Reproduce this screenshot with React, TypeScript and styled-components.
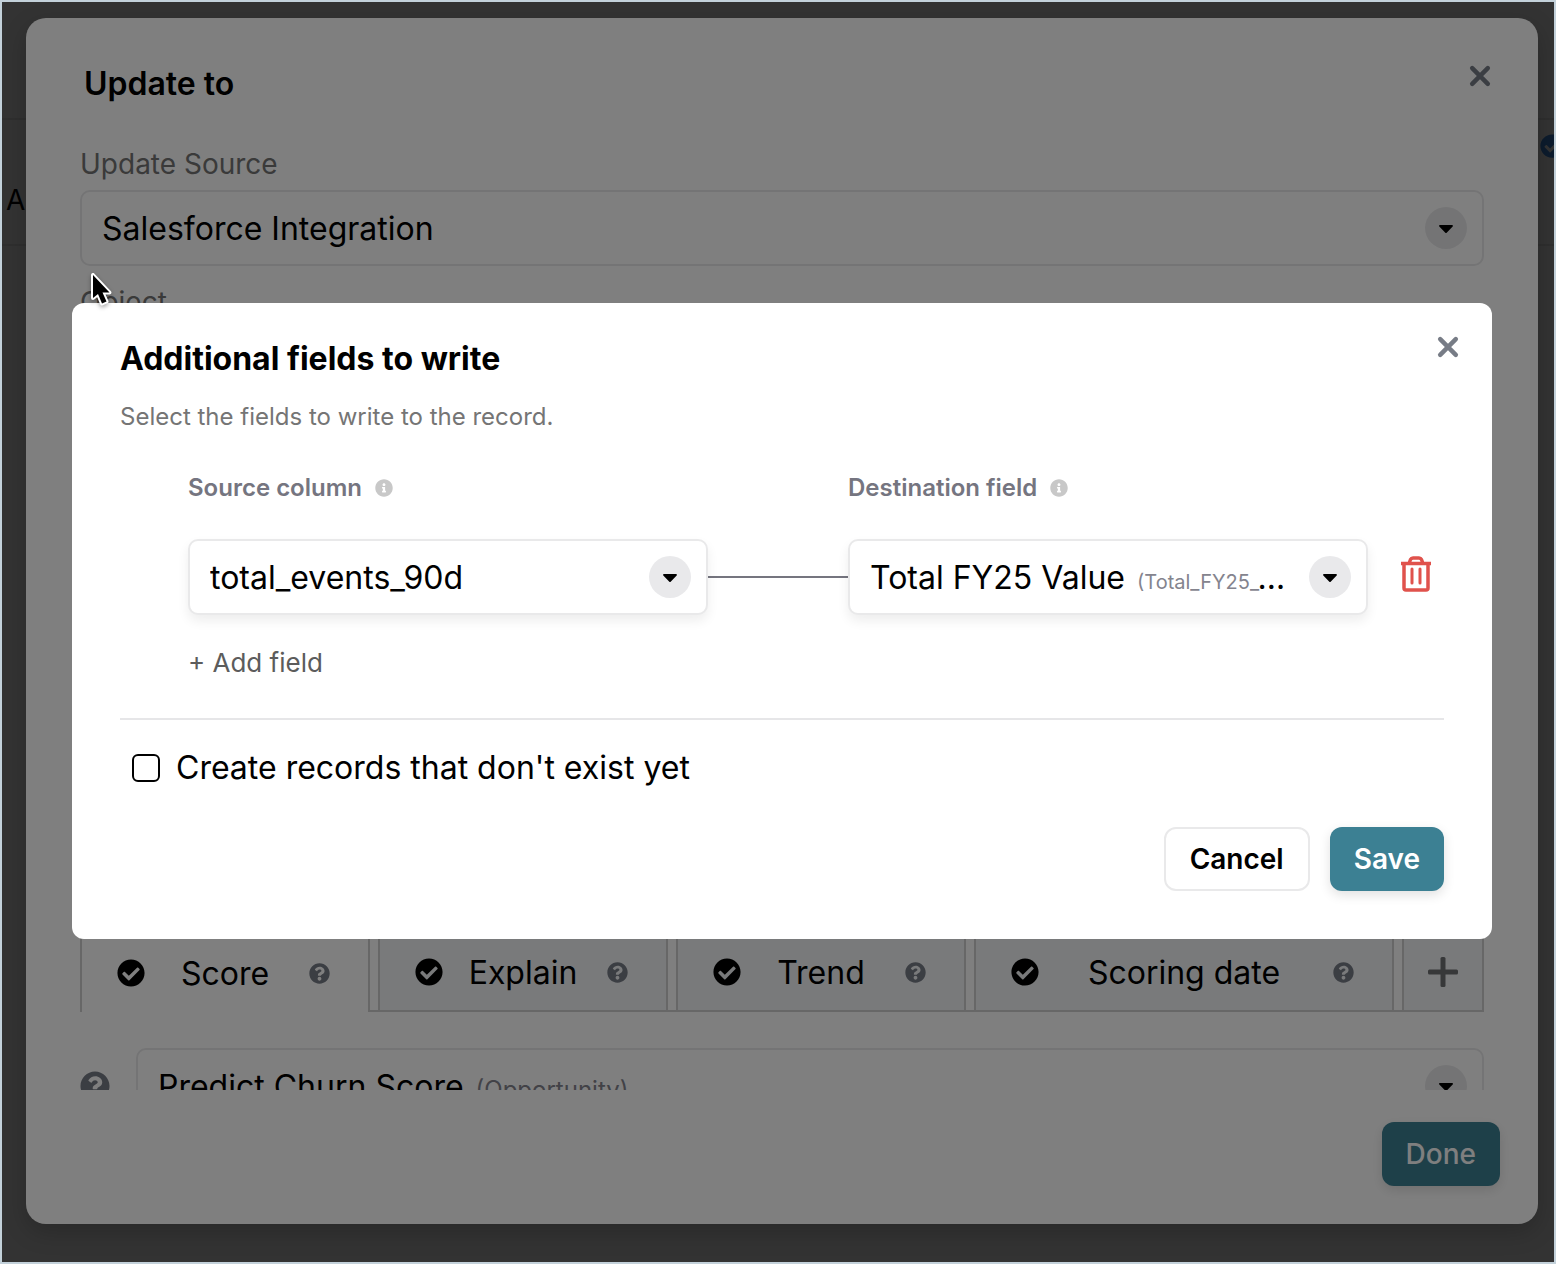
import React, { useId, useState } from 'react';
import styled, { createGlobalStyle, css } from 'styled-components';
import { FaCaretDown, FaCheckCircle, FaInfoCircle, FaQuestionCircle } from 'react-icons/fa';

const GlobalStyle = createGlobalStyle`
  *, *::before, *::after { box-sizing: border-box; }
  body { margin: 0; font-family: Inter, "Liberation Sans", sans-serif; color: #000; }
  button, input, select { font: inherit; color: inherit; }
  h1, h2, p { margin: 0; }
`;

const Frame = styled.div`
  display: grid;
  grid-template-columns: minmax(0, 1fr);
  min-height: 100vh;
  border: 2px solid #c3d1da;
  overflow: hidden;
`;

const layer = css`
  grid-area: 1 / 1;
  min-width: 0;
  isolation: isolate;
`;

const Backdrop = styled.div<{ $strength: number }>`
  ${layer}
  background: rgba(0, 0, 0, ${(p) => p.$strength});
`;

/* ---------- page behind the dialogs ---------- */

const Page = styled.main`
  ${layer}
  background: #fff;
  padding-top: 116px;
`;

const RecordRow = styled.div`
  display: flex;
  justify-content: space-between;
  height: 128px;
  padding: 24px 0 0 4px;
  border-top: 2px solid #e8e8e8;
  border-bottom: 2px solid #e8e8e8;
  font-size: 28px;
  line-height: 112px;
  overflow: hidden;
`;

const RecordName = styled.span`
  width: 20px;
`;

const RecordStatus = styled.span`
  display: flex;
  flex: none;
  height: 24px;
  margin-right: -10px;
  margin-top: -10px;
  color: #3f8ae0;
  font-size: 24px;
`;

/* ---------- update dialog ---------- */

const UpdateLayer = styled.div`
  ${layer}
  display: flex;
  padding: 16px 16px 38px 24px;
`;

const UpdateDialog = styled.section`
  flex: 1;
  min-width: 0;
  display: flex;
  flex-direction: column;
  padding: 38px 38px 38px 54px;
  background: #fff;
  border-radius: 20px;
  box-shadow: 0 8px 24px rgba(0, 0, 0, 0.2);
`;

const DialogHeader = styled.header`
  display: flex;
  align-items: flex-start;
  justify-content: space-between;
`;

const UpdateTitle = styled.h1`
  padding: 8px 4px 6px;
  font-size: 32px;
  line-height: 40px;
  font-weight: 600;
`;

const CloseButton = styled.button`
  display: flex;
  padding: 8px;
  border: 0;
  background: none;
  color: #777c86;
  cursor: pointer;
`;

const UpdateBody = styled.div`
  height: 980px;
  padding: 32px 16px 0 0;
  overflow: hidden;
`;

const FieldLabel = styled.label`
  display: block;
  padding: 4px 0 8px;
  font-size: 28px;
  line-height: 36px;
  color: #757575;
`;

const HiddenFields = styled.div`
  height: 650px;
  padding-top: 14px;
`;

const Tabs = styled.div`
  display: flex;
  gap: 8px;
  height: 96px;
  border-bottom: 2px solid #cecece;
`;

const Tab = styled.button<{ $active?: boolean; $grow?: boolean }>`
  display: flex;
  align-items: center;
  flex: ${(p) => (p.$grow ? '1 1 420px' : '0 0 290px')};
  height: ${(p) => (p.$active ? 96 : 94)}px;
  padding: 16px 38px 0 35px;
  border: 2px solid #cecece;
  border-bottom: 0;
  border-radius: 8px 8px 0 0;
  background: ${(p) => (p.$active ? '#fff' : '#f2f4f6')};
  font-size: 32px;
  cursor: pointer;
`;

const TabName = styled.span`
  flex: 1;
  padding-right: 4px;
  text-align: center;
`;

const AddTab = styled(Tab)`
  flex: 0 0 82px;
  justify-content: center;
  padding: 16px 0 0;
  color: #6f7073;
`;

const TabHelp = styled(FaQuestionCircle)`
  color: #777c86;
`;

const ScoreRow = styled.div`
  display: flex;
  align-items: center;
  gap: 26px;
  padding-top: 36px;
`;

const RowHelp = styled(FaQuestionCircle)`
  flex: none;
  color: #777c86;
`;

const UpdateFooter = styled.footer`
  display: flex;
  justify-content: flex-end;
  padding-top: 32px;
`;

/* ---------- shared controls ---------- */

const SelectBox = styled.div<{ $raised?: boolean }>`
  position: relative;
  flex: 1;
  min-width: 0;
  display: flex;
  align-items: center;
  height: 76px;
  padding: 0 15px 0 20px;
  border: 2px solid #e9e9ea;
  border-radius: 10px;
  background: #fff;
  font-size: 32px;
  box-shadow: ${(p) => (p.$raised ? '0 6px 12px rgba(0, 0, 0, 0.07)' : 'none')};
`;

const PlainSelect = styled.select`
  flex: 1;
  min-width: 0;
  height: 100%;
  padding: 0;
  border: 0;
  outline: 0;
  background: none;
  appearance: none;
`;

const CoverSelect = styled.select`
  position: absolute;
  inset: 0;
  width: 100%;
  opacity: 0;
  cursor: pointer;
`;

const Value = styled.span`
  flex: 1;
  min-width: 0;
  overflow: hidden;
  white-space: nowrap;
  text-overflow: ellipsis;
`;

const Detail = styled.small<{ $size: number }>`
  margin-left: 12px;
  font-size: ${(p) => p.$size}px;
  color: #84848e;
`;

const Caret = styled.span`
  display: flex;
  flex: none;
  align-items: center;
  justify-content: center;
  width: 42px;
  height: 42px;
  margin-left: 16px;
  border-radius: 50%;
  background: #e9e9eb;
  pointer-events: none;
`;

const Button = styled.button<{ $primary?: boolean; $medium?: boolean }>`
  height: 64px;
  padding: 0 24px;
  border: ${(p) => (p.$primary ? '0' : '2px solid #e9e9ea')};
  border-radius: 12px;
  background: ${(p) => (p.$primary ? '#3c8093' : '#fff')};
  color: ${(p) => (p.$primary ? '#fff' : '#000')};
  font-size: 28px;
  font-weight: ${(p) => (p.$medium ? 500 : 600)};
  box-shadow: ${(p) => (p.$primary ? '0 4px 12px rgba(0, 0, 0, 0.12)' : 'none')};
  cursor: pointer;
`;

/* ---------- fields dialog ---------- */

const FieldsLayer = styled.div`
  ${layer}
  display: flex;
  align-items: flex-start;
  padding: 301px 62px 0 70px;
`;

const FieldsDialog = styled.section`
  flex: 1;
  min-width: 0;
  padding: 24px 48px 48px;
  border-radius: 12px;
  background: #fff;
`;

const FieldsHeader = styled(DialogHeader)`
  margin-right: -24px;
`;

const FieldsTitle = styled.h2`
  padding-top: 12px;
  font-size: 32px;
  line-height: 40px;
  font-weight: 700;
`;

const Hint = styled.p`
  padding-top: 20px;
  font-size: 24px;
  line-height: 36px;
  color: #757575;
`;

const Mapping = styled.div`
  display: grid;
  grid-template-columns: minmax(0, 1fr) 140px minmax(0, 1fr) 76px;
  align-items: center;
  row-gap: 30px;
  padding: 32px 0 0 68px;
`;

const ColumnHead = styled.div`
  display: flex;
  align-items: center;
  gap: 13px;
  color: #757580;
  font-size: 24px;
  line-height: 42px;
  font-weight: 600;
`;

const InfoIcon = styled(FaInfoCircle)`
  color: #c8c8c8;
`;

const Connector = styled.hr`
  width: 100%;
  margin: 0;
  border: 0;
  border-top: 2px solid #75757f;
`;

const DeleteButton = styled.button`
  display: flex;
  justify-content: flex-end;
  padding: 0 12px 6px 0;
  border: 0;
  background: none;
  color: #e0524c;
  cursor: pointer;
`;

const AddField = styled.button`
  display: block;
  margin: 28px 0 0 68px;
  padding: 0;
  border: 0;
  background: none;
  color: #5c5c5c;
  font-size: 26px;
  line-height: 40px;
  cursor: pointer;
`;

const Divider = styled.hr`
  margin: 35px 0 28px;
  border: 0;
  border-top: 2px solid #e6e6e8;
`;

const CheckLabel = styled.label`
  display: flex;
  align-items: center;
  gap: 16px;
  padding-left: 12px;
  font-size: 32px;
  line-height: 40px;
`;

const Checkbox = styled.input`
  appearance: none;
  width: 28px;
  height: 28px;
  margin: 0;
  border: 2px solid #000;
  border-radius: 6px;
  background: #fff;
  &:checked { background: #3c8093; }
`;

const Actions = styled.footer`
  display: flex;
  justify-content: flex-end;
  gap: 20px;
  padding-top: 39px;
`;

const Pointer = styled.svg`
  position: absolute;
  left: 84px;
  top: 264px;
  filter: drop-shadow(0 2px 2px rgba(0, 0, 0, 0.35));
  pointer-events: none;
`;

const CloseIcon = () => (
  <svg width="24" height="24" viewBox="0 0 24 24" fill="none" stroke="currentColor" strokeWidth="4.500" strokeLinecap="round" aria-hidden="true">
    <path d="M4.200 4.200 19.800 19.800M19.800 4.200 4.200 19.800" />
  </svg>
);

const PlusIcon = () => (
  <svg width="30" height="30" viewBox="0 0 30 30" fill="currentColor" aria-hidden="true">
    <rect x="12.500" y="0" width="5" height="30" rx="1.500" />
    <rect x="0" y="12.500" width="30" height="5" rx="1.500" />
  </svg>
);

const TrashIcon = () => (
  <svg width="32" height="36" viewBox="0 0 32 36" fill="none" stroke="currentColor" strokeWidth="3.500" strokeLinejoin="round" aria-hidden="true">
    <path d="M1 7.500H31M9 7.500 10.500 3.500Q11.200 2 13 2H19Q20.800 2 21.500 3.500L23 7.500M4 8V32Q4 34 6 34H26Q28 34 28 32V8" />
    <path d="M12 13V27M20 13V27" strokeWidth="3" strokeLinecap="round" />
  </svg>
);

interface SelectProps {
  id: string;
  value: string;
  detail?: string;
  detailSize?: number;
  raised?: boolean;
  label?: string;
}

function Select({ id, value, detail, detailSize = 20, raised, label }: SelectProps) {
  return (
    <SelectBox $raised={raised}>
      {detail ? (
        <>
          <Value aria-hidden="true">
            {value}
            <Detail $size={detailSize}>{detail}</Detail>
          </Value>
          <CoverSelect id={id} aria-label={label}>
            <option>{value}</option>
          </CoverSelect>
        </>
      ) : (
        <PlainSelect id={id} aria-label={label}>
          <option>{value}</option>
        </PlainSelect>
      )}
      <Caret>
        <FaCaretDown size={24} />
      </Caret>
    </SelectBox>
  );
}

const tabs = [
  { name: 'Score' },
  { name: 'Explain' },
  { name: 'Trend' },
  { name: 'Scoring date', grow: true },
];

export default function App() {
  const id = useId();
  const [active, setActive] = useState('Score');
  const [create, setCreate] = useState(false);

  return (
    <>
      <GlobalStyle />
      <Frame>
        <Page>
          <RecordRow>
            <RecordName>A</RecordName>
            <RecordStatus>
              <FaCheckCircle />
            </RecordStatus>
          </RecordRow>
        </Page>
        <Backdrop $strength={0.6} />

        <UpdateLayer>
          <UpdateDialog role="dialog" aria-labelledby={`${id}-update`}>
            <DialogHeader>
              <UpdateTitle id={`${id}-update`}>Update to</UpdateTitle>
              <CloseButton aria-label="Close update">
                <CloseIcon />
              </CloseButton>
            </DialogHeader>
            <UpdateBody>
              <FieldLabel htmlFor={`${id}-source`}>Update Source</FieldLabel>
              <Select id={`${id}-source`} value="Salesforce Integration" />
              <HiddenFields>
                <FieldLabel as="span">Object</FieldLabel>
              </HiddenFields>
              <Tabs>
                {tabs.map((t) => (
                  <Tab key={t.name} $active={active === t.name} $grow={t.grow} onClick={() => setActive(t.name)}>
                    <FaCheckCircle size={28} />
                    <TabName>{t.name}</TabName>
                    <TabHelp size={21} />
                  </Tab>
                ))}
                <AddTab aria-label="Add column">
                  <PlusIcon />
                </AddTab>
              </Tabs>
              <ScoreRow>
                <RowHelp size={30} />
                <Select id={`${id}-score`} value="Predict Churn Score" detail="(Opportunity)" detailSize={24} label="Score field" />
              </ScoreRow>
            </UpdateBody>
            <UpdateFooter>
              <Button $primary $medium>
                Done
              </Button>
            </UpdateFooter>
          </UpdateDialog>
        </UpdateLayer>
        <Backdrop $strength={0.5} />

        <FieldsLayer>
          <FieldsDialog role="dialog" aria-modal="true" aria-labelledby={`${id}-fields`}>
            <FieldsHeader>
              <FieldsTitle id={`${id}-fields`}>Additional fields to write</FieldsTitle>
              <CloseButton aria-label="Close">
                <CloseIcon />
              </CloseButton>
            </FieldsHeader>
            <Hint>Select the fields to write to the record.</Hint>
            <Mapping>
              <ColumnHead>
                <label htmlFor={`${id}-col`}>Source column</label>
                <InfoIcon size={18} />
              </ColumnHead>
              <span />
              <ColumnHead>
                <label htmlFor={`${id}-dest`}>Destination field</label>
                <InfoIcon size={18} />
              </ColumnHead>
              <span />
              <Select id={`${id}-col`} value="total_events_90d" raised />
              <Connector />
              <Select id={`${id}-dest`} value="Total FY25 Value" detail="(Total_FY25_Value__c)" raised />
              <DeleteButton aria-label="Delete field">
                <TrashIcon />
              </DeleteButton>
            </Mapping>
            <AddField>+ Add field</AddField>
            <Divider />
            <CheckLabel>
              <Checkbox type="checkbox" checked={create} onChange={(e) => setCreate(e.target.checked)} />
              Create records that don't exist yet
            </CheckLabel>
            <Actions>
              <Button>Cancel</Button>
              <Button $primary>Save</Button>
            </Actions>
          </FieldsDialog>
        </FieldsLayer>
      </Frame>
      <Pointer width="32" height="46" viewBox="0 0 32 46" aria-hidden="true">
        <path
          d="M9 11V34L14 30L18 39.500L22.500 37.500L18.500 28.500H25.500Z"
          fill="#000"
          stroke="#fff"
          strokeWidth="4"
          strokeLinejoin="round"
          paintOrder="stroke"
        />
      </Pointer>
    </>
  );
}
